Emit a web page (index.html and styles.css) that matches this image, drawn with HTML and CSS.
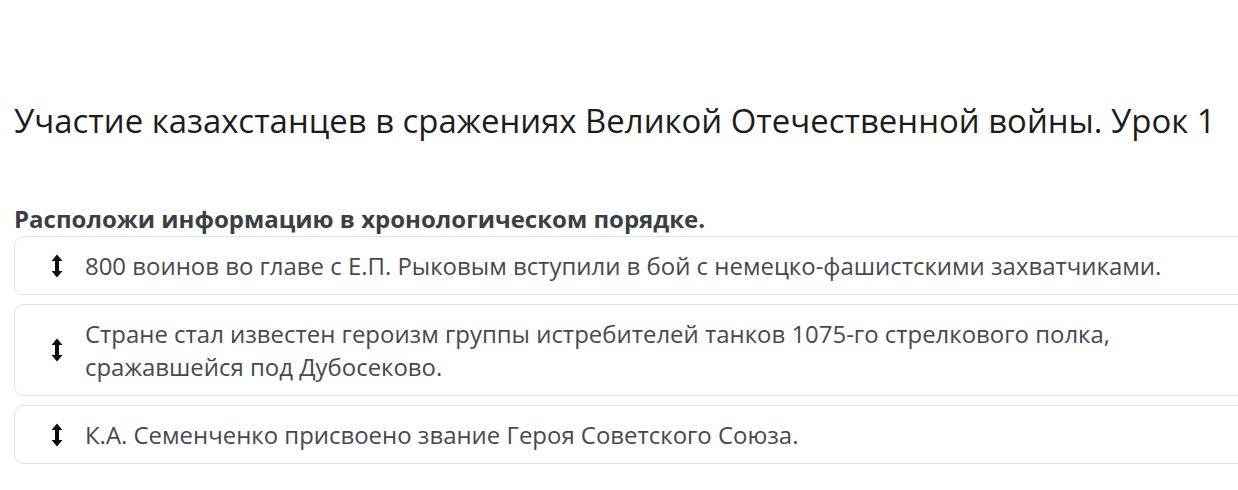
FILE: index.html
```html
<!DOCTYPE html>
<html lang="ru">
<head>
<meta charset="utf-8">
<title>Урок</title>
<link rel="stylesheet" href="styles.css">
</head>
<body>
<main class="page">
  <h1 class="title">Участие казахстанцев в сражениях Великой Отечественной войны. Урок 1</h1>
  <section class="task">
    <h2 class="task-q">Расположи информацию в хронологическом порядке.</h2>
    <ul class="sort-list">
      <li class="sort-item">
        <span class="handle"><svg width="12" height="24" viewBox="0 0 12 24"><path d="M6 0.5 L11.5 7 H8 V17 H11.5 L6 23.5 L0.5 17 H4 V7 H0.5 Z" fill="#0d0d0d"/></svg></span>
        <span class="sort-text">800 воинов во главе с Е.П. Рыковым вступили в бой с немецко-фашистскими захватчиками.</span>
      </li>
      <li class="sort-item">
        <span class="handle"><svg width="12" height="24" viewBox="0 0 12 24"><path d="M6 0.5 L11.5 7 H8 V17 H11.5 L6 23.5 L0.5 17 H4 V7 H0.5 Z" fill="#0d0d0d"/></svg></span>
        <span class="sort-text">Стране стал известен героизм группы истребителей танков 1075-го стрелкового полка, сражавшейся под Дубосеково.</span>
      </li>
      <li class="sort-item">
        <span class="handle"><svg width="12" height="24" viewBox="0 0 12 24"><path d="M6 0.5 L11.5 7 H8 V17 H11.5 L6 23.5 L0.5 17 H4 V7 H0.5 Z" fill="#0d0d0d"/></svg></span>
        <span class="sort-text">К.А. Семенченко присвоено звание Героя Советского Союза.</span>
      </li>
    </ul>
  </section>
</main>
</body>
</html>
```
FILE: styles.css
```css
html, body {
  margin: 0;
  padding: 0;
  overflow: hidden;
  background: #fff;
}
body {
  font-family: "Open Sans", "Noto Sans", sans-serif;
}
.page {
  padding: 99px 0 0 14px;
}
.title {
  margin: 0;
  font-size: 32.9px;
  font-weight: 400;
  line-height: 44px;
  color: #1c1c1c;
}
.task {
  margin-top: 61px;
}
.task-q {
  margin: 0 0 2px;
  font-size: 24px;
  font-weight: 700;
  line-height: 30px;
  color: #3b3e43;
}
.sort-list {
  list-style: none;
  margin: 0;
  padding: 0;
  width: 1260px;
  display: flex;
  flex-direction: column;
  gap: 9px;
}
.sort-item {
  display: flex;
  align-items: center;
  gap: 22px;
  padding: 12px 20px 12px 36px;
  border: 1px solid #e2e2e2;
  border-radius: 9px;
  background: #fff;
}
.handle {
  flex: none;
  width: 12px;
  height: 24px;
  display: flex;
}
.sort-text {
  font-size: 23.95px;
  line-height: 33px;
  color: #46494e;
  max-width: 1100px;
}
```
